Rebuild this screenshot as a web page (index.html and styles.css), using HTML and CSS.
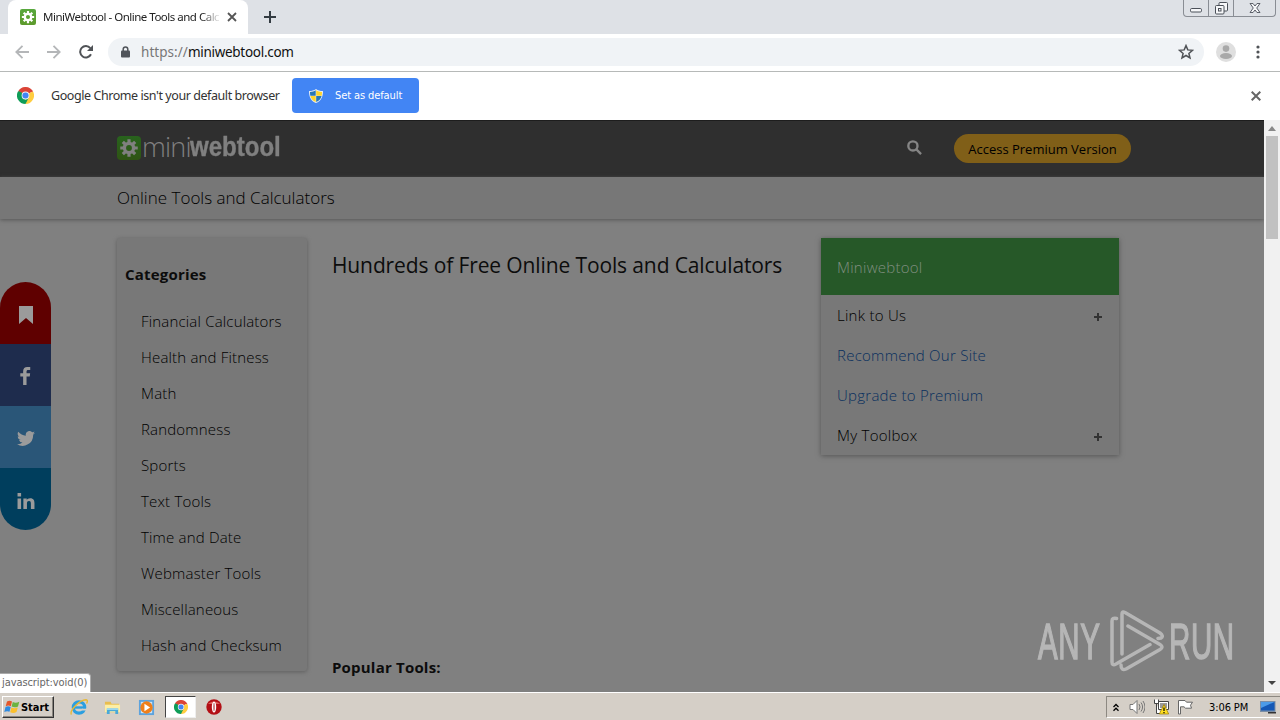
FILE: index.html
```html
<!DOCTYPE html>
<html lang="en">
<head>
<meta charset="utf-8">
<title>MiniWebtool - Online Tools and Calculators</title>
<link rel="stylesheet" href="styles.css">
</head>
<body>
<svg width="0" height="0" class="defs" aria-hidden="true">
  <defs>
    <symbol id="gear" viewBox="0 0 24 24">
      <g fill="none" stroke="currentColor"><circle cx="12" cy="12" r="5.500" stroke-width="4"/>
      <path stroke-width="3.800" d="M12 1.500v4M12 18.500v4M1.500 12h4M18.500 12h4M4.600 4.600l2.800 2.800M16.600 16.600l2.800 2.800M19.400 4.600l-2.800 2.800M7.400 16.600l-2.800 2.800"/></g>
    </symbol>
    <symbol id="chrome" viewBox="0 0 24 24">
      <path fill="#db4437" d="M12 12 1.600 6A12 12 0 0 1 22.400 6z"/>
      <path fill="#0f9d58" d="M12 12v12A12 12 0 0 1 1.600 6z"/>
      <path fill="#ffcd40" d="M12 12 22.400 6A12 12 0 0 1 12 24z"/>
      <path fill="#db4437" d="M12 6.500h10.700L22 5.200 12 4z"/>
      <path fill="#0f9d58" d="m7.200 14.700-5.500-9L7 8zM7.200 14.700 12 18l4.700-3.300L12 24z"/>
      <circle cx="12" cy="12" r="5.500" fill="#f1f1f1"/><circle cx="12" cy="12" r="4.300" fill="#4285f4"/>
    </symbol>
  </defs>
</svg>

<header class="tabstrip">
  <div class="tab">
    <span class="favicon"><svg viewBox="0 0 24 24"><use href="#gear"/></svg></span>
    <span class="tab-title">MiniWebtool - Online Tools and Calcu</span>
    <svg class="tab-close" viewBox="0 0 10 10"><path d="m1 1 8 8M9 1 1 9"/></svg>
  </div>
  <svg class="newtab" viewBox="0 0 12 12"><path d="M6 0v12M0 6h12"/></svg>
  <div class="winctl">
    <span class="wc-min"><svg viewBox="0 0 12 5"><rect x=".5" y=".5" width="11" height="3.500" rx="1.200"/></svg></span>
    <span class="wc-max"><svg viewBox="0 0 13 13"><rect x="4" y=".5" width="8.500" height="8.500" rx="1"/><rect x=".5" y="3.500" width="8.500" height="8.500" rx="1"/><rect x="3.500" y="6.500" width="2.500" height="2.500"/></svg></span>
    <span class="wc-close"><svg viewBox="0 0 12 11"><path d="M.5.500h3.300L6 3.300 8.200.500h3.300L7.900 5.500l3.600 5H8.200L6 7.700l-2.200 2.800H.5l3.600-5z"/></svg></span>
  </div>
</header>

<nav class="toolbar">
  <svg class="arrow" viewBox="0 0 14 14"><path d="M14 7H1M7.500.800 1.300 7l6.200 6.200"/></svg>
  <svg class="arrow" viewBox="0 0 14 14"><path d="M0 7h13M6.500.800 12.700 7l-6.200 6.200"/></svg>
  <svg class="reload" viewBox="0 0 14 14"><path class="ln" d="M12 9.300A5.700 5.700 0 1 1 11.300 3.200"/><path class="fl" d="M14 0v6H8z"/></svg>
  <div class="omnibox">
    <svg class="lock" viewBox="0 0 9 12"><path d="M2.200 5V3.300a2.300 2.300 0 0 1 4.600 0V5"/><rect y="4.500" width="9" height="7" rx="1"/></svg>
    <span class="url"><i>https://</i>miniwebtool.com</span>
    <svg class="star" viewBox="0 0 16 16"><path d="m8 1.600 1.800 4.300 4.700.4-3.600 3.100 1.100 4.600L8 11.500 4 14l1.100-4.600L1.500 6.300l4.700-.4z"/></svg>
  </div>
  <svg class="avatar" viewBox="0 0 20 20"><circle cx="10" cy="10" r="10" fill="#dfdfdf"/><circle cx="10" cy="6.600" r="3.300"/><ellipse cx="10" cy="14" rx="6" ry="3"/></svg>
  <svg class="kebab" viewBox="0 0 4 14"><circle cx="2" cy="2" r="1.600"/><circle cx="2" cy="7" r="1.600"/><circle cx="2" cy="12" r="1.600"/></svg>
</nav>

<section class="infobar">
  <svg class="ib-logo"><use href="#chrome"/></svg>
  <span class="ib-text">Google Chrome isn't your default browser</span>
  <button class="ib-btn">
    <svg viewBox="0 0 14 14"><path fill="#e8eef5" d="M7 0c2 1.500 4 2 7 2 0 6-2 10-7 12C2 12 0 8 0 2c3 0 5-.5 7-2z"/><path fill="#2877b5" d="M6.700 1.300v5.400H1.300C1 5.500 1 4 1 3c2.500 0 4-.7 5.700-1.700zM7.200 7h5.400c-.8 3-2.600 5-5.400 6z"/><path fill="#ffd52b" d="M7.200 1.300v5.400h5.500C13 5.500 13 4 13 3c-2.500 0-4-.7-5.800-1.700zM6.700 7H1.400c.8 3 2.500 5 5.300 6z"/></svg>
    <span>Set as default</span>
  </button>
  <svg class="ib-close" viewBox="0 0 10 10"><path d="m.7.700 8.600 8.600M9.300.700.7 9.300"/></svg>
</section>

<div class="window">
  <main class="page">
    <header class="site-head">
      <div class="logo"><span class="logo-mark"><svg viewBox="0 0 24 24"><use href="#gear"/></svg></span><span class="logo-a">mini</span><span class="logo-b">webtool</span></div>
      <svg class="search" viewBox="0 0 16 16"><circle cx="6.300" cy="6.300" r="4.900"/><path d="m10 10 5 5"/></svg>
      <a class="premium"><span>Access Premium Version</span></a>
    </header>
    <div class="crumb"><span>Online Tools and Calculators</span></div>
    <div class="cols">
      <aside class="cats">
        <h3>Categories</h3>
        <ul>
          <li>Financial Calculators</li>
          <li>Health and Fitness</li>
          <li>Math</li>
          <li>Randomness</li>
          <li>Sports</li>
          <li>Text Tools</li>
          <li>Time and Date</li>
          <li>Webmaster Tools</li>
          <li>Miscellaneous</li>
          <li>Hash and Checksum</li>
        </ul>
      </aside>
      <section class="mid">
        <h1>Hundreds of Free Online Tools and Calculators</h1>
        <h3>Popular Tools:</h3>
      </section>
      <aside class="menu">
        <div class="menu-head">Miniwebtool</div>
        <div class="row">Link to Us<svg viewBox="0 0 8 8"><path d="M4 0v8M0 4h8"/></svg></div>
        <div class="row link">Recommend Our Site</div>
        <div class="row link">Upgrade to Premium</div>
        <div class="row">My Toolbox<svg viewBox="0 0 8 8"><path d="M4 0v8M0 4h8"/></svg></div>
      </aside>
    </div>
    <div class="share">
      <span class="s-book"><svg viewBox="0 0 14 18"><path d="M0 0h14v18l-7-6-7 6z"/></svg></span>
      <span class="s-fb"><svg viewBox="0 0 11 19"><path d="M3 19v-9H0V6.700h3V4.500C3 1.500 4.700 0 7.300 0H10.500v3.200H8.400C7 3.200 6.600 3.800 6.600 5v1.700h3.800L10 10H6.600v9z"/></svg></span>
      <span class="s-tw"><svg viewBox="0 0 24 20"><path d="M24 2.400a10 10 0 0 1-2.800.8A4.900 4.900 0 0 0 23.300.500a10 10 0 0 1-3.100 1.200 4.900 4.900 0 0 0-8.400 4.500A14 14 0 0 1 1.700 1.100a4.900 4.900 0 0 0 1.500 6.500A4.900 4.900 0 0 1 1 7v.1a4.900 4.900 0 0 0 3.900 4.800 5 5 0 0 1-2.200.1 4.900 4.900 0 0 0 4.600 3.400A9.900 9.900 0 0 1 0 17.500a14 14 0 0 0 21.500-12.400A10 10 0 0 0 24 2.400z"/></svg></span>
      <span class="s-in"><svg viewBox="0 0 18 17"><path d="M0 5.800h3.800V17H0zM0 0h3.800v3.600H0zM6.200 5.800h3.600v1.600c.6-1.100 1.800-1.900 3.600-1.900C17.200 5.500 18 8 18 11v6h-3.800v-5.500c0-1.500-.2-2.900-2-2.900-1.900 0-2.200 1.400-2.200 2.900V17H6.200z"/></svg></span>
    </div>
    <div class="status">javascript:void(0)</div>
    <div class="brand">
      <span>ANY</span>
      <svg viewBox="0 0 56 64"><path d="M14 44V4Q14 1 17 2.500L52 23Q56 26 53 28L50 28.500M8.500 8.500Q4 7.500 4 11V52Q4 56 8 54L42 34.500M20 16 52 34.500Q56 37 52 39.500L18 59Q13 61 13 55"/></svg>
      <span>RUN</span>
    </div>
  </main>
  <div class="scroll"><i class="up"></i><i class="thumb"></i><i class="down"></i></div>
</div>

<footer class="taskbar">
  <div class="start">
    <svg viewBox="0 0 16 14"><path fill="#e4572a" d="M3 1.500C5 .300 6.500.600 8 1.500L6.800 6.300C5 5.300 3.500 5.500 1.700 6.300z"/><path fill="#6cb33f" d="M8.800 2c2 1 4 1 6.500-.3L14 6.500c-2.200 1.200-4.200 1-6.400.1z"/><path fill="#2f8be0" d="M1.500 7c2-1 3.500-.8 5.200 0L5.500 11.800C4 11 2.200 11 .3 12z"/><path fill="#fbc02d" d="M7.400 7.400c2 1 4 1 6.400 0l-1.300 4.700c-2.200 1.200-4 1.100-6.300.2z"/></svg>
    <b>Start</b>
  </div>
  <svg class="ie" viewBox="0 0 18 18"><circle cx="9" cy="9.500" r="5.700" fill="none" stroke="#2b9fe0" stroke-width="3.200"/><path d="M4 9.500h11" stroke="#2b9fe0" stroke-width="2.400"/><path d="M12 10.700h6v1.800h-6z" fill="#d4d0c8"/><path d="M1.500 16.500C-1 13 9 2 16 1.700c2 .3 1.500 2.300.5 3.800" fill="none" stroke="#e9b935" stroke-width="1.400"/></svg>
  <svg class="ex" viewBox="0 0 18 18"><path fill="#e8bd4f" d="M1 3h6l1 2h8v9H1z"/><path fill="#fdeea5" d="M1 6h16v8H1z"/><path fill="#49a9d9" d="M3 10h12v6h-3v-3H6v3H3z"/><path fill="#a8def4" d="M3 10h12v1.500H3z"/></svg>
  <svg class="wm" viewBox="0 0 18 18"><path fill="#5da3dd" d="M1 1h16v16H1z"/><path fill="#cce5f7" d="M3 3h12v12H3z"/><circle cx="9" cy="9" r="6.500" fill="#ef7f1a"/><path fill="#fff" d="M6.800 5v8l6-4z"/></svg>
  <div class="active"><svg><use href="#chrome"/></svg></div>
  <svg class="op" viewBox="0 0 16 16"><circle cx="8" cy="8" r="7.700" fill="#b30f15"/><path d="M2 5a7 5 0 0 1 12 0" fill="#dd5c58"/><ellipse cx="8" cy="8" rx="2.200" ry="5.500" fill="#fff"/><ellipse cx="8" cy="8" rx=".5" ry="4.300" fill="#a00c12"/></svg>
  <div class="tray">
    <svg class="chev" viewBox="0 0 6 8"><path d="M.5 3.500 3 1l2.500 2.500M.5 7.200 3 4.700l2.500 2.500"/></svg>
    <svg class="vol" viewBox="0 0 16 16"><path d="M1 5.500h3l4-4v13l-4-4H1z" fill="#fff"/><path d="M10 5q2 3 0 6M12 3.500q3.200 4.500 0 9M14 2q4 6 0 12" fill="none"/></svg>
    <svg class="net" viewBox="0 0 16 16"><path fill="#fff" stroke="#444" d="M5.500 2.500h10v8h-10zM1.500.5v4h4v-4M3.500 4.500v10h4"/><path fill="#999" d="M7 4h7v5H7z"/><path fill="#ffdf20" stroke="#9b7800" stroke-width=".7" d="m11 5.500 4.700 9.500H6.300z"/><path d="M11 8.500v3.500M11 13v1.200" stroke="#000" stroke-width="1.200"/></svg>
    <svg class="flag" viewBox="0 0 16 16"><path fill="#fff" stroke="#666" d="M1.500 15V1.500H8l1.500 1.700h6l-2 3 1 3H8.500L7 7.800H3.500V15z"/></svg>
    <span class="clock">3:06 PM</span>
    <svg class="desk" viewBox="0 0 16 13"><path fill="#7b8ea5" d="M0 0h15.500v11H0z"/><path fill="#1458b5" d="M1 1h13.500v8.500H1z"/><path fill="#4b9be8" d="M1 1h13.500L1 7z"/><path fill="#333" d="M8 11h8v1.500H8z"/></svg>
  </div>
</footer>
</body>
</html>
```
FILE: styles.css
```css
* { box-sizing: border-box; }
body { margin: 0; width: 1280px; height: 720px; overflow: hidden; display: flex; flex-direction: column; background: #fff; font-family: "DejaVu Sans Condensed", "DejaVu Sans", sans-serif; font-size: 12px; color: #333; }
svg { display: block; flex: none; }
.defs { position: absolute; }
h1, h3, ul { margin: 0; padding: 0; list-style: none; }
span { white-space: nowrap; }

.tabstrip { height: 34px; flex: none; display: flex; align-items: flex-start; background: #dee1e6; padding-left: 8px; }
.tab { width: 240px; height: 34px; background: #fff; border-radius: 8px 8px 0 0; display: flex; align-items: center; padding-left: 12px; }
.favicon { width: 16px; height: 16px; border-radius: 2px; background: linear-gradient(#58a83e, #5d9a2b); color: #fff; padding: 1px; }
.favicon svg { width: 14px; height: 14px; }
.tab-title { width: 176px; margin-left: 7px; padding-bottom: 1px; font-family: "Noto Sans", sans-serif; font-size: 11.500px; letter-spacing: -.5px; color: #222; -webkit-mask-image: linear-gradient(90deg, #000 158px, transparent 178px); }
.tab-close { width: 10px; height: 10px; margin-left: 8px; stroke: #555; stroke-width: 1.800; }
.newtab { width: 12px; height: 12px; margin: 11px 0 0 16px; stroke: #333b42; stroke-width: 2; }
.winctl { margin-left: auto; margin-right: 4px; width: 93px; height: 17px; display: flex; border: 1px solid #898d94; border-top: 0; border-radius: 0 0 4px 4px; }
.winctl span { display: flex; justify-content: center; }
.winctl svg { fill: #f6f7f9; stroke: #4b5059; stroke-width: 1; }
.wc-min { width: 25px; padding-top: 8px; border-right: 1px solid #898d94; }
.wc-min svg { width: 12px; height: 5px; }
.wc-max { width: 25px; padding-top: 2px; border-right: 1px solid #898d94; }
.wc-max svg { width: 13px; height: 13px; }
.wc-close { width: 41px; padding-top: 3px; }
.wc-close svg { width: 12px; height: 10px; }

.toolbar { height: 38px; flex: none; display: flex; align-items: center; padding: 0 20px 1px 15px; border-bottom: 1px solid #b6b9b8; }
.arrow { width: 14px; height: 14px; margin-right: 18px; fill: none; stroke: #b4b6b8; stroke-width: 1.8; }
.reload { width: 14px; height: 14px; }
.reload .ln { fill: none; stroke: #505357; stroke-width: 2; }
.reload .fl { fill: #505357; }
.omnibox { margin-left: 15px; width: 1096px; height: 28px; border-radius: 14px; background: #f0f3f6; display: flex; align-items: center; padding: 0 10px 0 13px; }
.lock { width: 9px; height: 12px; fill: #50545a; }
.lock path { fill: none; stroke: #50545a; stroke-width: 1.500; }
.url { margin-left: 11px; font-family: "Noto Sans", sans-serif; font-size: 13.500px; letter-spacing: -.29px; line-height: 20px; color: #111; }
.url i { font-style: normal; color: #777; letter-spacing: .05px; }
.star { width: 16px; height: 16px; margin-left: auto; fill: none; stroke: #505357; stroke-width: 1.500; }
.avatar { width: 20px; height: 20px; margin-left: 12px; fill: #a9a9a9; }
.kebab { width: 4px; height: 14px; margin-left: auto; fill: #505357; }

.infobar { height: 48px; flex: none; display: flex; align-items: center; padding: 0 19px 1px 17px; }
.ib-logo { width: 17px; height: 17px; }
.ib-text { margin-left: 17px; width: 241px; font-family: "Noto Sans", sans-serif; font-size: 12.500px; letter-spacing: -.43px; padding-bottom: 1px; }
.ib-btn { width: 127px; height: 35px; border: 0; border-radius: 4px; background: #4285f4; color: #fff; display: flex; align-items: center; padding: 0 0 0 17px; font: 11px "DejaVu Sans Condensed", sans-serif; }
.ib-btn svg { width: 14px; height: 14px; }
.ib-btn span { margin-left: 12px; letter-spacing: -.1px; }
.ib-close { width: 10px; height: 10px; margin-left: auto; stroke: #666; stroke-width: 2; }

.window { height: 572px; flex: none; display: flex; }
.page { width: 1264px; height: 572px; position: relative; overflow: hidden; background: #808080; font-family: "Open Sans", "Noto Sans", sans-serif; font-size: 15px; color: #000; }
.site-head { height: 57px; background: #2f2f2f; display: flex; align-items: center; padding: 0 133px 0 117px; border-top: 1px solid #1d1d1d; }
.logo { display: flex; align-items: center; height: 30px; margin-top: -2px; }
.logo-mark { width: 24px; height: 24px; border-radius: 4px; background: linear-gradient(#28631d, #2f5414); color: #808080; padding: 2px; margin-right: 1px; }
.logo-mark svg { width: 20px; height: 20px; }
.logo-a { font: 300 27px/30px "Open Sans", sans-serif; letter-spacing: -.8px; color: #808080; width: 48px; padding-bottom: 2px; }
.logo-b { font: 700 27px/30px "Liberation Sans Narrow", "Liberation Sans", sans-serif; color: #808080; width: 92px; padding-bottom: 2px; transform: scaleX(.89); transform-origin: 0 50%; -webkit-text-stroke: .4px #808080; }
.search { width: 15px; height: 15px; margin: -4px 32px 0 auto; fill: none; stroke: #858585; stroke-width: 2.500; }
.premium { width: 177px; height: 29px; margin-top: -1px; border-radius: 15px; background: #805f18; color: #000; font-size: 13px; display: flex; align-items: center; justify-content: center; letter-spacing: 0; }
.crumb { height: 42px; background: #777; padding: 0 117px 1px; display: flex; align-items: center; font-size: 17px; font-weight: 300; box-shadow: 0 1px 4px #555; }
.cols { display: flex; align-items: flex-start; padding: 19px 0 0 117px; font-weight: 300; letter-spacing: .18px; }
.cats { width: 190px; height: 433px; background: #787878; border-radius: 3px; box-shadow: 0 1px 4px #5e5e5e; padding: 25px 8px 0; }
h3 { font-size: 15px; line-height: 22px; font-weight: 700; letter-spacing: .2px; color: #0c0c0c; }
.cats ul { padding: 18px 0 0 16px; }
.cats li { height: 36px; line-height: 36px; white-space: nowrap; }
.mid { width: 489px; margin-left: 25px; height: 453px; display: flex; flex-direction: column; }
h1 { font-size: 21px; line-height: 30px; font-weight: 400; letter-spacing: -.12px; white-space: nowrap; margin-top: 12px; color: #0c0c0c; }
.mid h3 { margin-top: 376px; }
.menu { width: 298px; background: #787878; box-shadow: 0 1px 5px #555; letter-spacing: .26px; }
.menu-head { height: 57px; line-height: 58px; padding-left: 16px; background: #265828; color: #808f80; }
.row { height: 40px; padding: 0 17px 0 16px; display: flex; align-items: center; justify-content: space-between; }
.row svg { width: 8px; height: 8px; stroke: #333; stroke-width: 2; margin-top: 3px; }
.link { color: #082f5e; }
.share { position: absolute; left: 0; top: 162px; width: 51px; height: 248px; border-radius: 26px; overflow: hidden; }
.share span { height: 62px; display: flex; align-items: center; justify-content: center; }
.share svg { fill: #9b9b9b; }
.s-book { background: #5f0000; }
.s-book svg { width: 14px; height: 18px; margin-top: 4px; }
.s-fb { background: #1e2c4d; }
.s-fb svg { width: 11px; height: 18px; margin-top: 2px; }
.s-tw { background: #2a5678; }
.s-tw svg { width: 18px; height: 15px; margin-top: 2px; }
.s-in { background: #003e5d; }
.s-in svg { width: 18px; height: 16px; margin-top: 3px; }
.status { position: absolute; left: 0; bottom: 0; width: 91px; height: 19px; background: #fff; border: 1px solid #aaa; border-width: 1px 1px 0 0; border-radius: 0 4px 0 0; padding-left: 2px; font: 11px/18px "DejaVu Sans Condensed", sans-serif; letter-spacing: -.08px; color: #666; white-space: nowrap; }
.brand { position: absolute; left: 1038px; top: 490px; height: 64px; display: flex; align-items: center; color: #b6b6b6; }
.brand span { font: 400 50px/60px "Liberation Sans Narrow", "Liberation Sans", sans-serif; width: 66px; transform: scaleX(.59); transform-origin: 0 50%; -webkit-text-stroke: 1.500px #b6b6b6; letter-spacing: 1px; }
.brand svg { width: 56px; height: 64px; margin-left: 4px; margin-right: 5px; fill: none; stroke: #b6b6b6; stroke-width: 3.500; stroke-linejoin: round; stroke-linecap: round; }
.scroll { width: 16px; background: #f1f1f1; display: flex; flex-direction: column; align-items: center; }
.scroll .up { border: 4px solid transparent; border-top: 0; border-bottom: 5px solid #888; margin-top: 6px; }
.scroll .thumb { width: 12px; height: 103px; margin-top: 5px; background: #c1c1c1; }
.scroll .down { border: 4px solid transparent; border-bottom: 0; border-top: 4px solid #444; margin-top: auto; margin-bottom: 7px; }

.taskbar { height: 28px; flex: none; background: #d5cfc7; border-top: 1px solid #fff; display: flex; align-items: center; padding: 1px 0 0 2px; color: #000; }
.start { width: 52px; height: 22px; display: flex; align-items: center; padding-left: 1px; border: 1px solid #fff; border-right: 1px solid #333; border-bottom: 1px solid #333; box-shadow: inset -1px -1px 0 #8a867f; }
.start svg { width: 16px; height: 14px; }
.start b { font: 700 11px "DejaVu Sans Condensed", sans-serif; letter-spacing: -.05px; margin-left: 1px; }
.ie { width: 18px; height: 18px; margin-left: 16px; }
.ex { width: 17px; height: 17px; margin-left: 16px; }
.wm { width: 17px; height: 17px; margin-left: 17px; }
.active { width: 31px; height: 22px; margin-left: 10px; background: #fff; border: 1px solid #444; border-right-color: #eee; border-bottom-color: #eee; display: flex; align-items: center; justify-content: center; }
.active svg { width: 14px; height: 14px; }
.op { width: 16px; height: 16px; margin-left: 10px; }
.tray { margin-left: auto; width: 174px; height: 22px; display: flex; align-items: center; border: 1px solid #8d8982; border-right: 0; border-bottom-color: #fff; padding-left: 6px; }
.chev { width: 6px; height: 9px; fill: none; stroke: #000; stroke-width: 1.300; }
.vol { width: 16px; height: 16px; margin-left: 10px; stroke: #777; }
.net { width: 16px; height: 16px; margin-left: 8px; }
.flag { width: 16px; height: 16px; margin-left: 8px; }
.clock { margin-left: 16px; width: 42px; font-size: 11px; letter-spacing: -.1px; }
.desk { width: 16px; height: 13px; margin-left: 9px; }
```
